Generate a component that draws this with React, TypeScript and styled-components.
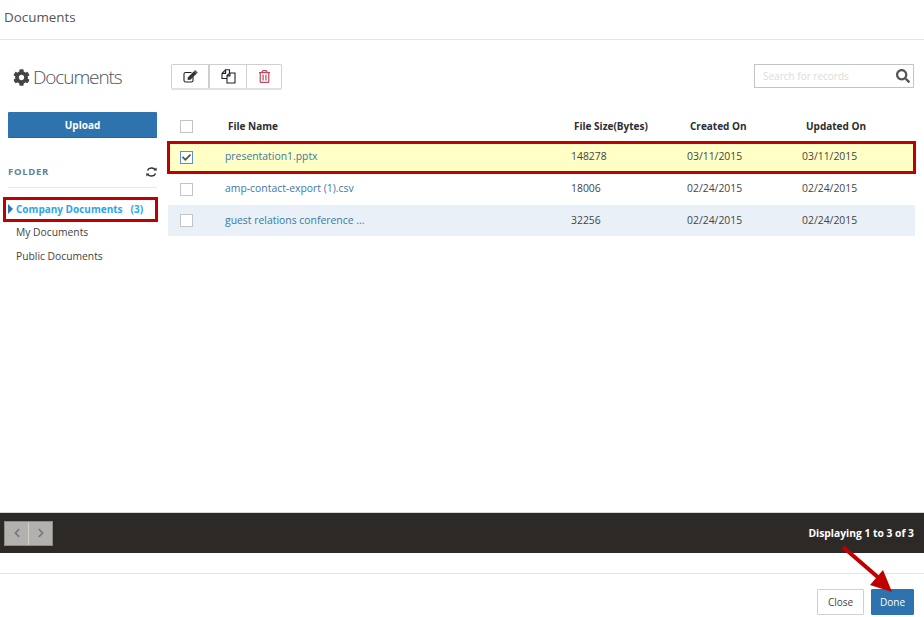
import React from 'react'
import styled, { createGlobalStyle } from 'styled-components'
import { FaCog, FaSearch, FaRegTrashAlt, FaCheck, FaChevronLeft, FaChevronRight } from 'react-icons/fa'

const GlobalStyle = createGlobalStyle`
  html, body {
    margin: 0;
    padding: 0;
    background: #fff;
    font-family: "Open Sans", "Liberation Sans", sans-serif;
    font-size: 10px;
    color: #333;
  }
  * { box-sizing: border-box; }
`

const Page = styled.div`
  position: relative;
  width: 924px;
  height: 617px;
  overflow: hidden;
  display: flex;
  flex-direction: column;
`

const Header = styled.header`
  height: 40px;
  flex: none;
  border-bottom: 1px solid #e5e5e5;
  padding: 9px 0 0 4px;
  font-size: 13.4px;
  line-height: 17px;
  color: #555;
`

const Body = styled.div`
  height: 472px;
  flex: none;
  display: flex;
  padding-left: 8px;
`

const Sidebar = styled.aside`
  width: 149px;
  flex: none;
  padding-top: 25px;
`

const Title = styled.h1`
  margin: 0 0 0 5px;
  height: 24px;
  display: flex;
  align-items: center;
  gap: 3px;
  font-size: 19px;
  font-weight: 300;
  letter-spacing: -1.1px;
  color: #4a5560;
  svg { color: #444; font-size: 17px; flex: none; }
`

const UploadButton = styled.button`
  display: block;
  width: 100%;
  height: 26px;
  margin-top: 23px;
  border: 0;
  border-bottom: 1px solid #28659a;
  border-radius: 1px;
  background: #2e73ad;
  color: #fff;
  font: 700 10px "Open Sans", sans-serif;
`

const FolderHead = styled.div`
  height: 50px;
  display: flex;
  align-items: flex-end;
  justify-content: space-between;
  padding: 0 0 9px;
  border-bottom: 1px solid #e8e8e8;
  font-size: 9.5px;
  line-height: 12px;
  font-weight: 700;
  letter-spacing: 0.7px;
  color: #5f8199;
`

const FolderList = styled.ul`
  list-style: none;
  margin: 10px 0 0;
  padding: 0;
`

const FolderItem = styled.li<{ $active?: boolean }>`
  position: relative;
  height: 24px;
  display: flex;
  align-items: center;
  padding-left: 8px;
  font-size: ${p => (p.$active ? 10 : 10.3)}px;
  font-weight: ${p => (p.$active ? 700 : 400)};
  color: ${p => (p.$active ? '#2ca6e8' : '#444')};
  ${p => p.$active && `
    outline: 3px solid #c00000;
    outline-offset: -3px;
    height: 25px;
    margin: -1px 0 -2px -5px;
    width: 155px;
    padding: 0 0 1px 13px;
  `}
`

const Caret = styled.span`
  position: absolute;
  left: 5px;
  top: 7px;
  width: 0;
  height: 0;
  border-style: solid;
  border-width: 5px 0 5px 5px;
  border-color: transparent transparent transparent #2277c4;
`

const Count = styled.span`
  margin-left: 8px;
`

const Main = styled.main`
  width: 747px;
  margin-left: 11px;
  flex: none;
  padding-top: 24px;
`

const TopBar = styled.div`
  display: flex;
  justify-content: space-between;
  align-items: flex-start;
  padding-left: 3px;
  height: 47px;
`

const ToolGroup = styled.div`
  display: flex;
  height: 26px;
  border: 1px solid #d0d0d0;
  border-radius: 2px;
  border-bottom-width: 2px;
  border-bottom-color: #e0e0e0;
`

const ToolButton = styled.button<{ $w: number; $color: string }>`
  width: ${p => p.$w}px;
  height: 100%;
  padding: 0;
  border: 0;
  border-right: 1px solid #cfcfcf;
  background: #fff;
  color: ${p => p.$color};
  font-size: 13px;
  display: flex;
  align-items: center;
  justify-content: center;
  &:first-child { border-right-width: 2px; }
  &:last-child { border-right: 0; }
`

const SearchBox = styled.div`
  width: 160px;
  height: 24px;
  margin-right: 1px;
  border: 1px solid #c4c4c4;
  display: flex;
  align-items: center;
  justify-content: space-between;
  padding: 0 3px 0 8px;
  font-size: 10px;
  color: #dcdcdc;
  svg { color: #555; font-size: 14px; }
`

const Row = styled.div<{ $tone?: 'plain' | 'blue' | 'picked' }>`
  display: grid;
  grid-template-columns: 57px 346px 116px 115px 1fr;
  align-items: center;
  height: ${p => (p.$tone === 'plain' ? 32 : 31)}px;
  font-size: 10.4px;
  color: #444;
  background: ${p => (p.$tone === 'blue' ? '#e9f0f7' : p.$tone === 'picked' ? '#ffffc6' : '#fff')};
  ${p => p.$tone === 'picked' && `
    outline: 3px solid #c00000;
    outline-offset: -2px;
  `}
`

const HeadRow = styled(Row)`
  height: 31px;
  font-size: 10px;
  font-weight: 700;
  color: #2d2d2d;
`

const HeadCell = styled.div<{ $shift?: number }>`
  padding: 0 0 1px ${p => p.$shift ?? 3}px;
`

const Cell = styled.div<{ $lift: number }>`
  padding-bottom: ${p => p.$lift}px;
`

const FileLink = styled(Cell)`
  color: #3c78a8;
`

const CheckBox = styled.span<{ $checked?: boolean }>`
  width: 13px;
  height: 13px;
  margin-left: 12px;
  display: flex;
  align-items: center;
  justify-content: center;
  background: #fff;
  border: 1px solid ${p => (p.$checked ? '#5b8fd6' : '#c4c4c4')};
  color: #555;
  font-size: 9px;
`

const Pager = styled.div`
  height: 41px;
  flex: none;
  background: #2d2926;
  border-top: 1px solid #d8d8d8;
  display: flex;
  align-items: center;
  justify-content: space-between;
  padding: 0 10px 0 4px;
  color: #fff;
  font-size: 10.3px;
  font-weight: 700;
`

const PagerButtons = styled.div`
  display: flex;
  width: 49px;
  height: 25px;
  background: #b3b1ae;
  border: 1px solid #8d8b88;
`

const PagerButton = styled.span`
  flex: 1;
  display: flex;
  align-items: center;
  justify-content: center;
  color: #6f7680;
  font-size: 10px;
  & + & { border-left: 1px solid #d2d0cd; }
`

const Footer = styled.footer`
  margin-top: 20px;
  height: 44px;
  flex: none;
  border-top: 1px solid #e5e5e5;
  display: flex;
  justify-content: flex-end;
  align-items: flex-start;
  gap: 7px;
  padding: 15px 10px 0 0;
`

const FooterButton = styled.button<{ $primary?: boolean }>`
  height: 26px;
  width: ${p => (p.$primary ? 43 : 47)}px;
  padding: 0;
  font: 400 10px "Open Sans", sans-serif;
  border: 1px solid ${p => (p.$primary ? '#2e73ad' : '#d0d0d0')};
  border-radius: 1px;
  background: ${p => (p.$primary ? '#2e73ad' : '#fff')};
  color: ${p => (p.$primary ? '#fff' : '#444')};
`

const Arrow = styled.svg`
  position: absolute;
  left: 838px;
  top: 543px;
`

const RefreshIcon = () => (
  <svg width="11" height="12" viewBox="0 0 11 12" fill="none" stroke="#333" strokeWidth="1.5">
    <path d="M1.5 4.5 C2.5 1.5 7.5 1 9.4 3.8" />
    <path d="M9.5 7.5 C8.5 10.5 3.5 11 1.6 8.2" />
    <path d="M7.6 4.4 L11 4.4 L10.4 1.4 Z" fill="#333" stroke="none" />
    <path d="M3.4 7.6 L0 7.6 L0.6 10.6 Z" fill="#333" stroke="none" />
  </svg>
)

const EditIcon = () => (
  <svg width="15" height="13" viewBox="0 0 15 13">
    <path d="M10 6.5 V10.4 A1.6 1.6 0 0 1 8.4 12 H2.6 A1.6 1.6 0 0 1 1 10.4 V4.1 A1.6 1.6 0 0 1 2.6 2.5 H8.5" fill="none" stroke="#222" strokeWidth="1.1" />
    <path d="M5 7.2 L11.2 1 L13.8 3.4 L7.4 9.7 L4.6 10 Z" fill="#333" />
    <path d="M11.2 1 L12.2 0 L14.8 2.4 L13.8 3.4 Z" fill="#5a5a5a" />
  </svg>
)

const CopyIcon = () => (
  <svg width="15" height="15" viewBox="0 0 15 15" fill="#fff" stroke="#1f1f2e" strokeWidth="1.1">
    <path d="M1 9.5 V4.4 L4.6 0.8 H8.5 V9.5 Z" />
    <path d="M4.6 0.8 V4.4 H1" fill="none" />
    <path d="M6 14 V6.6 L8.9 4 H14 V14 Z" />
    <path d="M8.9 4 V6.9 H6" fill="none" />
  </svg>
)

const files = [
  { name: 'presentation1.pptx', size: '148278', created: '03/11/2015', updated: '03/11/2015', tone: 'picked' as const, lift: 3 },
  { name: 'amp-contact-export (1).csv', size: '18006', created: '02/24/2015', updated: '02/24/2015', tone: 'plain' as const, lift: 2 },
  { name: 'guest relations conference ...', size: '32256', created: '02/24/2015', updated: '02/24/2015', tone: 'blue' as const, lift: 1 },
]

const App: React.FC = () => {
  return (
    <Page>
      <GlobalStyle />
      <Header>Documents</Header>
      <Body>
        <Sidebar>
          <Title><FaCog />Documents</Title>
          <UploadButton>Upload</UploadButton>
          <FolderHead>
            FOLDER
            <RefreshIcon />
          </FolderHead>
          <FolderList>
            <FolderItem $active>
              <Caret />
              Company Documents <Count>(3)</Count>
            </FolderItem>
            <FolderItem>My Documents</FolderItem>
            <FolderItem>Public Documents</FolderItem>
          </FolderList>
        </Sidebar>
        <Main>
          <TopBar>
            <ToolGroup>
              <ToolButton $w={38} $color="#222"><EditIcon /></ToolButton>
              <ToolButton $w={37} $color="#222"><CopyIcon /></ToolButton>
              <ToolButton $w={34} $color="#c0485c"><FaRegTrashAlt /></ToolButton>
            </ToolGroup>
            <SearchBox>
              Search for records
              <FaSearch />
            </SearchBox>
          </TopBar>
          <HeadRow>
            <CheckBox />
            <HeadCell>File Name</HeadCell>
            <HeadCell>File Size(Bytes)</HeadCell>
            <HeadCell>Created On</HeadCell>
            <HeadCell $shift={4}>Updated On</HeadCell>
          </HeadRow>
          {files.map(f => (
            <Row key={f.name} $tone={f.tone}>
              <CheckBox $checked={f.tone === 'picked'}>
                {f.tone === 'picked' && <FaCheck />}
              </CheckBox>
              <FileLink $lift={f.lift}>{f.name}</FileLink>
              <Cell $lift={f.lift}>{f.size}</Cell>
              <Cell $lift={f.lift}>{f.created}</Cell>
              <Cell $lift={f.lift}>{f.updated}</Cell>
            </Row>
          ))}
        </Main>
      </Body>
      <Pager>
        <PagerButtons>
          <PagerButton><FaChevronLeft /></PagerButton>
          <PagerButton><FaChevronRight /></PagerButton>
        </PagerButtons>
        Displaying 1 to 3 of 3
      </Pager>
      <Footer>
        <FooterButton>Close</FooterButton>
        <FooterButton $primary>Done</FooterButton>
      </Footer>
      <Arrow width="60" height="52" viewBox="0 0 60 52">
        <path d="M5 4 L42 36" stroke="#c00000" strokeWidth="4" fill="none" />
        <path d="M32 42 L54 49 L45 27 Z" fill="#c00000" />
      </Arrow>
    </Page>
  )
}

export default App
